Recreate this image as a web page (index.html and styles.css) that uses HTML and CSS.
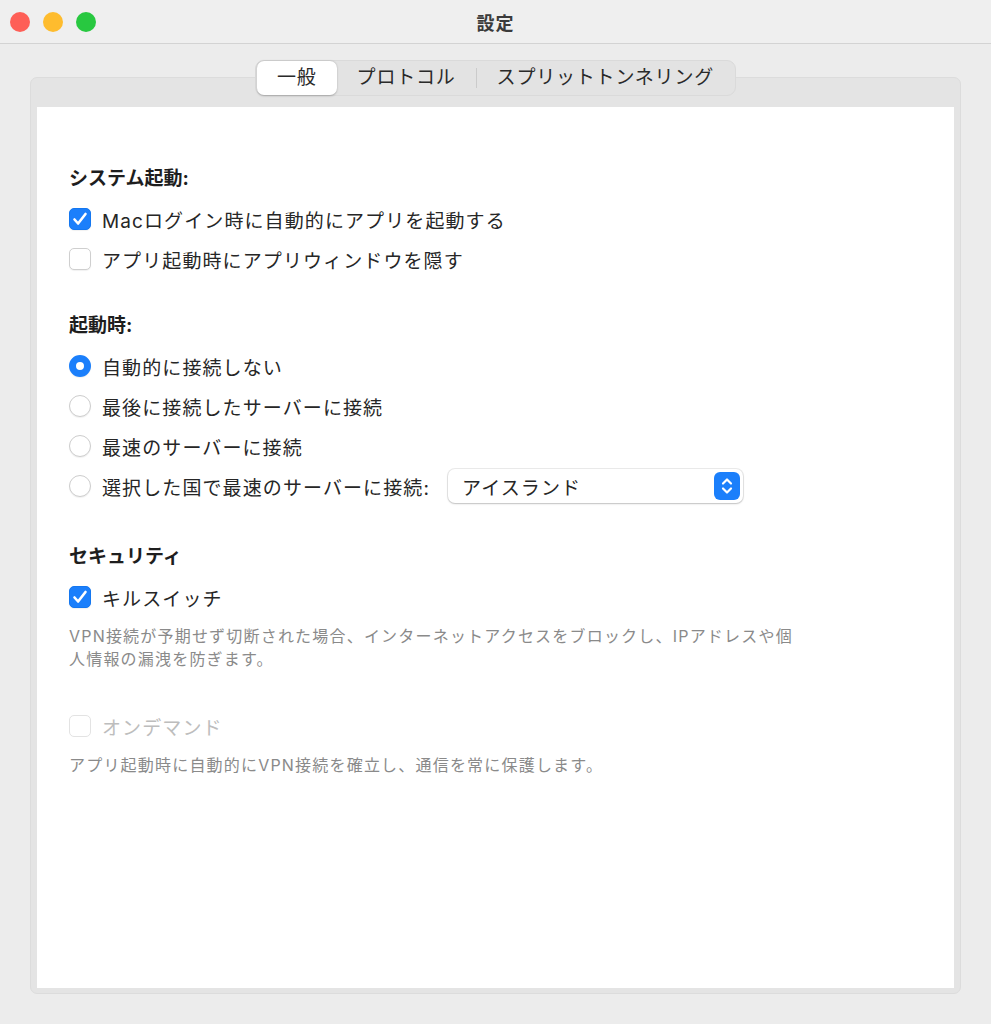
FILE: index.html
```html
<!DOCTYPE html>
<html lang="ja">

<head>
    <meta charset="UTF-8">
    <meta name="viewport" content="width=device-width, initial-scale=1.0">
    <title>設定</title>
    <link rel="stylesheet" href="styles.css">
</head>

<body>

    <div class="titlebar">
        <div class="lights">
            <span class="light red"></span>
            <span class="light yellow"></span>
            <span class="light green"></span>
        </div>
        <div class="title">設定</div>
    </div>

    <div class="window-body">
        <div class="tabs">
            <div class="segment">
                <span class="seg-item active">一般</span>
                <span class="seg-item">プロトコル</span>
                <span class="seg-sep"></span>
                <span class="seg-item">スプリットトンネリング</span>
            </div>
        </div>

        <div class="panel">
            <div class="sheet">

                <div class="group">
                    <div class="group-title">システム起動:</div>
                    <div class="option">
                        <span class="check on">
                            <svg viewBox="0 0 22 22" width="22" height="22"><path d="M5.5 11.5l3.6 4 7.4-9.5" fill="none" stroke="#fff" stroke-width="2.6" stroke-linecap="round" stroke-linejoin="round"/></svg>
                        </span>
                        <span class="option-label">Macログイン時に自動的にアプリを起動する</span>
                    </div>
                    <div class="option">
                        <span class="check"></span>
                        <span class="option-label">アプリ起動時にアプリウィンドウを隠す</span>
                    </div>
                </div>

                <div class="group">
                    <div class="group-title">起動時:</div>
                    <div class="option">
                        <span class="radio on"></span>
                        <span class="option-label">自動的に接続しない</span>
                    </div>
                    <div class="option">
                        <span class="radio"></span>
                        <span class="option-label">最後に接続したサーバーに接続</span>
                    </div>
                    <div class="option">
                        <span class="radio"></span>
                        <span class="option-label">最速のサーバーに接続</span>
                    </div>
                    <div class="option">
                        <span class="radio"></span>
                        <span class="option-label">選択した国で最速のサーバーに接続:</span>
                        <div class="popup">
                            <span class="popup-value">アイスランド</span>
                            <span class="stepper">
                                <svg viewBox="0 0 26 28" width="26" height="28"><path d="M9 11.5l4-4 4 4M9 16.5l4 4 4-4" fill="none" stroke="#fff" stroke-width="2.2" stroke-linecap="round" stroke-linejoin="round"/></svg>
                            </span>
                        </div>
                    </div>
                </div>

                <div class="group security">
                    <div class="group-title">セキュリティ</div>
                    <div class="option">
                        <span class="check on">
                            <svg viewBox="0 0 22 22" width="22" height="22"><path d="M5.5 11.5l3.6 4 7.4-9.5" fill="none" stroke="#fff" stroke-width="2.6" stroke-linecap="round" stroke-linejoin="round"/></svg>
                        </span>
                        <span class="option-label">キルスイッチ</span>
                    </div>
                    <p class="hint">VPN接続が予期せず切断された場合、インターネットアクセスをブロックし、IPアドレスや個人情報の漏洩を防ぎます。</p>

                    <div class="option disabled">
                        <span class="check"></span>
                        <span class="option-label">オンデマンド</span>
                    </div>
                    <p class="hint">アプリ起動時に自動的にVPN接続を確立し、通信を常に保護します。</p>
                </div>

            </div>
        </div>
    </div>

</body>

</html>
```

FILE: styles.css
```css
body {
    margin: 0;
    height: 1024px;
    background-color: #ececec;
    font-family: Inter, "Noto Sans CJK JP", sans-serif;
    color: #262626;
    overflow: hidden;
}

/* window chrome */
.titlebar {
    height: 43px;
    background: #efefef;
    border-bottom: 1px solid #d3d3d3;
    display: flex;
    align-items: center;
    position: relative;
}

.lights {
    display: flex;
    gap: 13px;
    padding-left: 10px;
}

.light {
    width: 20px;
    height: 20px;
    border-radius: 50%;
}

.red {
    background: #fe5f57;
}

.yellow {
    background: #febc2e;
}

.green {
    background: #28c840;
}

.title {
    position: absolute;
    left: 0;
    right: 0;
    text-align: center;
    font-size: 18px;
    font-weight: 600;
    color: #3b3b3b;
    letter-spacing: 1px;
}

.window-body {
    padding: 16px 30px 0;
}

/* segmented tab control */
.tabs {
    display: flex;
    justify-content: center;
    margin-bottom: -19px;
    position: relative;
    z-index: 1;
}

.segment {
    display: flex;
    align-items: center;
    height: 34px;
    padding: 0 1px;
    background: #e3e3e3;
    border: 1px solid #dadada;
    border-radius: 9px;
}

.seg-item {
    padding: 0 20px;
    height: 34px;
    line-height: 34px;
    font-size: 19px;
    letter-spacing: 0.8px;
    color: #2a2a2a;
}

.seg-item.active {
    background: #fff;
    border-radius: 7px;
    box-shadow: 0 0.5px 2px rgba(0, 0, 0, 0.25);
}

.seg-sep {
    width: 1px;
    height: 20px;
    background: #cbcbcb;
}

/* tab body */
.panel {
    height: 880px;
    padding: 29px 6px 6px;
    background: #e4e4e4;
    border: 1px solid #dcdcdc;
    border-radius: 7px;
}

.sheet {
    height: 829px;
    background: #fff;
    padding: 52px 32px 0;
}

.group + .group {
    margin-top: 27px;
}

.group.security {
    margin-top: 31px;
}

.group-title {
    height: 40px;
    line-height: 40px;
    font-size: 19px;
    font-weight: 700;
    color: #1e1e1e;
}

.option {
    display: flex;
    align-items: center;
    height: 40px;
}

.option-label {
    margin-left: 11px;
    font-size: 19px;
    letter-spacing: 1.1px;
}

.check {
    width: 22px;
    height: 22px;
    box-sizing: border-box;
    border-radius: 5px;
    background: #fff;
    border: 1px solid #cfcfcf;
    box-shadow: 0 1px 1px rgba(0, 0, 0, 0.06);
}

.check.on {
    background: #1b7ffb;
    border-color: #1477f0;
}

.check.on svg {
    display: block;
    margin: -1px;
}

.radio {
    width: 22px;
    height: 22px;
    box-sizing: border-box;
    border-radius: 50%;
    background: #fff;
    border: 1px solid #cdcdcd;
    box-shadow: 0 1px 1px rgba(0, 0, 0, 0.06);
}

.radio.on {
    background: #fff;
    border: 7px solid #1b7ffb;
}

.popup {
    display: flex;
    align-items: center;
    justify-content: space-between;
    width: 295px;
    height: 34px;
    margin-left: 18px;
    padding: 0 3px 0 14px;
    box-sizing: border-box;
    background: #fff;
    border-radius: 7px;
    box-shadow: 0 0 0 1px rgba(0, 0, 0, 0.08), 0 1px 2px rgba(0, 0, 0, 0.18);
}

.popup-value {
    font-size: 19px;
    letter-spacing: 1.1px;
}

.stepper {
    width: 26px;
    height: 28px;
    border-radius: 6px;
    background: #1b7ffb;
}

.stepper svg {
    display: block;
}

.hint {
    margin: 8px 0 0;
    max-width: 728px;
    font-size: 16px;
    line-height: 23px;
    letter-spacing: 1.2px;
    color: #8a8a8a;
}

.option.disabled {
    margin-top: 35px;
}

.option.disabled .option-label {
    color: #bdbdbd;
}

.option.disabled .check {
    border-color: #e3e3e3;
    box-shadow: none;
}
```
